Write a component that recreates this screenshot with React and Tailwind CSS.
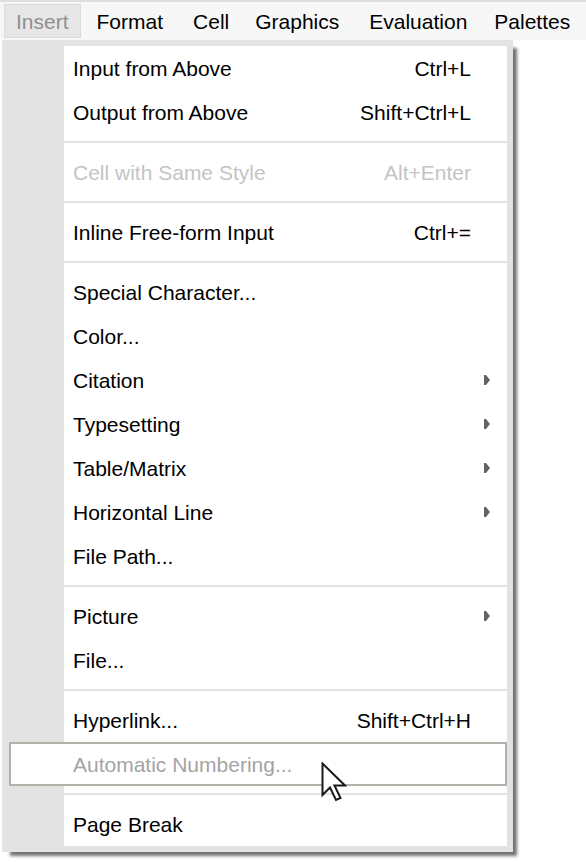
// Insert menu dropped down from the notebook menubar
const menuBar = [
  { label: 'Insert', ml: 'ml-[4px]', open: true },
  { label: 'Format', ml: 'ml-[4px]' },
  { label: 'Cell', ml: 'ml-[6px]' },
  { label: 'Graphics', ml: 'ml-[2px]' },
  { label: 'Evaluation', ml: 'ml-[6px]' },
  { label: 'Palettes', ml: 'ml-[3px]' },
];

const items = [
  { label: 'Input from Above', keys: 'Ctrl+L' },
  { label: 'Output from Above', keys: 'Shift+Ctrl+L' },
  'sep',
  { label: 'Cell with Same Style', keys: 'Alt+Enter', disabled: true },
  'sep',
  { label: 'Inline Free-form Input', keys: 'Ctrl+=' },
  'sep',
  { label: 'Special Character...' },
  { label: 'Color...' },
  { label: 'Citation', sub: true },
  { label: 'Typesetting', sub: true },
  { label: 'Table/Matrix', sub: true },
  { label: 'Horizontal Line', sub: true },
  { label: 'File Path...' },
  'sep',
  { label: 'Picture', sub: true },
  { label: 'File...' },
  'sep',
  { label: 'Hyperlink...', keys: 'Shift+Ctrl+H' },
  { label: 'Automatic Numbering...', disabled: true, hover: true },
  'sep',
  { label: 'Page Break' },
];

function SubArrow() {
  return (
    <svg width="6" height="10" viewBox="0 0 6 10" className="mr-[17px] shrink-0">
      <polygon points="0,0 2,0 6,5 2,10 0,10" fill="#636363" />
    </svg>
  );
}

function Cursor() {
  return (
    <svg
      width="26"
      height="40"
      viewBox="0 0 26 40"
      className="absolute left-[321px] top-[762px]"
    >
      <path
        d="M1.5 1.5 L1.5 33 L9 25.5 L15 38 L19.5 36 L13.5 23.5 L24 23.5 Z"
        fill="#ffffff"
        stroke="#1a1a1a"
        strokeWidth="2"
        strokeLinejoin="miter"
      />
    </svg>
  );
}

function MenuRow({ item }) {
  const color = item.hover
    ? 'text-[#a4a4a4]'
    : item.disabled
    ? 'text-[#c4c4c4]'
    : 'text-black';

  if (item.hover) {
    return (
      <div className="flex items-center h-[44px] ml-[7px] bg-white border-2 border-[#b2b2ab]">
        <span className={`flex-1 pl-[62px] ${color}`}>{item.label}</span>
      </div>
    );
  }

  return (
    <div className="flex h-[44px]">
      <div className="w-[62px] shrink-0" />
      <div className="flex-1 bg-white flex items-center pl-[9px]">
        <span className={`flex-1 ${color}`}>{item.label}</span>
        {item.keys && <span className={`pr-[36px] ${color}`}>{item.keys}</span>}
        {item.sub && <SubArrow />}
      </div>
    </div>
  );
}

export default function App() {
  return (
    <div className="relative w-[586px] h-[862px] bg-white overflow-hidden font-['Liberation_Sans',Arial,sans-serif] text-[21px] leading-none">
      {/* Menubar */}
      <div className="h-[40px] bg-[#f7f7f7] border-t-2 border-[#dedede] flex items-center">
        {menuBar.map(({ label, ml, open }) => (
          <div
            key={label}
            className={`${ml} h-[34px] px-[11px] flex items-center border ${
              open ? 'bg-[#e7e7e7] border-[#dcdcdc] text-[#8f8f8f]' : 'border-transparent text-black'
            }`}
          >
            {label}
          </div>
        ))}
      </div>

      {/* Dropdown panel */}
      <div className="ml-[2px] w-[511px] bg-[#e3e3e3] pt-[6px] pb-[6px] pr-[6px] shadow-[6px_6px_3px_-2px_rgba(0,0,0,0.55)]">
        {items.map((item, i) =>
          item === 'sep' ? (
            <div key={i} className="flex h-[16px]">
              <div className="w-[62px] shrink-0" />
              <div className="flex-1 bg-white flex items-center">
                <div className="h-[2px] w-full bg-[#e3e3e3]" />
              </div>
            </div>
          ) : (
            <MenuRow key={i} item={item} />
          )
        )}
      </div>

      <Cursor />
    </div>
  );
}
